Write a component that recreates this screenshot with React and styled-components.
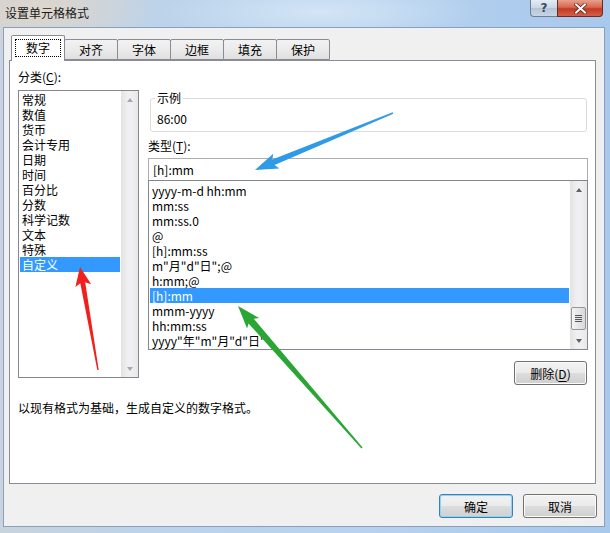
import React from 'react';
import styled, { createGlobalStyle } from 'styled-components';

const GlobalStyle = createGlobalStyle`
  html, body {
    margin: 0;
    padding: 0;
    background: #bcd4ee;
  }
  body {
    font-family: "Noto Sans CJK SC", "Microsoft YaHei", sans-serif;
    font-size: 12px;
    color: #000;
  }
`;

const categories = ['常规', '数值', '货币', '会计专用', '日期', '时间', '百分比', '分数', '科学记数', '文本', '特殊', '自定义'];
const formats = [
  'yyyy-m-d hh:mm',
  'mm:ss',
  'mm:ss.0',
  '@',
  '[h]:mm:ss',
  'm"月"d"日";@',
  'h:mm;@',
  '[h]:mm',
  'mmm-yyyy',
  'hh:mm:ss',
  'yyyy"年"m"月"d"日"',
];
const tabs = ['数字', '对齐', '字体', '边框', '填充', '保护'];

function arrowPoints([tx, ty], [hx, hy], headLen, headHalf, tailW, neckW) {
  const len = Math.hypot(hx - tx, hy - ty);
  const dx = (hx - tx) / len;
  const dy = (hy - ty) / len;
  const nx = -dy;
  const ny = dx;
  const bx = hx - dx * headLen;
  const by = hy - dy * headLen;
  const pts = [
    [tx + nx * tailW / 2, ty + ny * tailW / 2],
    [bx + nx * neckW / 2, by + ny * neckW / 2],
    [bx + nx * headHalf - dx * 3, by + ny * headHalf - dy * 3],
    [hx, hy],
    [bx - nx * headHalf - dx * 3, by - ny * headHalf - dy * 3],
    [bx - nx * neckW / 2, by - ny * neckW / 2],
    [tx - nx * tailW / 2, ty - ny * tailW / 2],
  ];
  return pts.map(p => p.map(v => v.toFixed(1)).join(',')).join(' ');
}

function App() {
  return (
    <>
      <GlobalStyle />
      <Window>
        <TitleBar>
          <Title>设置单元格格式</Title>
          <CaptionButtons>
            <HelpButton>?</HelpButton>
            <CloseButton>
              <svg width="13" height="11" viewBox="0 0 13 11">
                <path d="M2 1.5 L11 9.5 M11 1.5 L2 9.5" stroke="#5a1a10" strokeWidth="3.4" strokeLinecap="square" />
                <path d="M2 1.5 L11 9.5 M11 1.5 L2 9.5" stroke="#fff" strokeWidth="2" strokeLinecap="square" />
              </svg>
            </CloseButton>
          </CaptionButtons>
        </TitleBar>

        <Body>
          <TabRow>
            {tabs.map((t, i) => (
              <Tab key={t} $active={i === 0}>
                {i === 0 ? <Focus>{t}</Focus> : t}
              </Tab>
            ))}
          </TabRow>

          <Panel>
            <Columns>
              <LeftColumn>
                <FieldLabel>分类(<u>C</u>):</FieldLabel>
                <ListBox $height={288}>
                  <Rows>
                    {categories.map((c, i) => (
                      <Row key={c} $selected={i === categories.length - 1}>{c}</Row>
                    ))}
                  </Rows>
                  <ScrollBar>
                    <ScrollArrow $up $disabled />
                    <Track />
                    <ScrollArrow $disabled />
                  </ScrollBar>
                </ListBox>
              </LeftColumn>

              <RightColumn>
                <Sample>
                  <legend>示例</legend>
                  <SampleValue>86:00</SampleValue>
                </Sample>
                <TypeLabel>类型(<u>T</u>):</TypeLabel>
                <TypeInput>[h]:mm</TypeInput>
                <ListBox $height={170}>
                  <Rows $type>
                    {formats.map(f => (
                      <Row key={f} $selected={f === '[h]:mm'}>{f}</Row>
                    ))}
                  </Rows>
                  <ScrollBar>
                    <ScrollArrow $up />
                    <Track>
                      <Thumb>
                        <Grip />
                      </Thumb>
                    </Track>
                    <ScrollArrow />
                  </ScrollBar>
                </ListBox>
                <DeleteButton>删除(<u>D</u>)</DeleteButton>
              </RightColumn>
            </Columns>
            <Description>以现有格式为基础，生成自定义的数字格式。</Description>
          </Panel>

          <Footer>
            <Button $default>确定</Button>
            <Button>取消</Button>
          </Footer>
        </Body>

        <Overlay width="610" height="533" viewBox="0 0 610 533">
          <polygon points={arrowPoints([393, 113], [255, 170], 20, 8, 1.5, 6)} fill="#2f9ae8" />
          <polygon points={arrowPoints([98, 370], [80, 267], 16, 8, 1.5, 5)} fill="#f0201c" />
          <polygon points={arrowPoints([362, 448], [238, 306], 20, 8, 1.5, 7)} fill="#2aa634" />
        </Overlay>
      </Window>
    </>
  );
}

const Window = styled.div`
  position: relative;
  width: 610px;
  height: 533px;
  display: flex;
  flex-direction: column;
  overflow: hidden;
  background:
    radial-gradient(ellipse 120px 40px at 40px 10px, rgba(226, 214, 200, 0.9), rgba(226, 214, 200, 0) 100%),
    radial-gradient(ellipse 160px 30px at 320px 12px, rgba(214, 231, 246, 0.9), rgba(214, 231, 246, 0) 100%),
    linear-gradient(to right, #c8d3dd 0%, #bcd3ea 25%, #b7d2ef 60%, #a8c8ec 100%);
`;

const TitleBar = styled.div`
  height: 27px;
  display: flex;
  justify-content: space-between;
  align-items: flex-start;
  padding-left: 5px;
`;

const Title = styled.div`
  line-height: 26px;
  font-size: 12px;
  color: #1a1a1a;
`;

const CaptionButtons = styled.div`
  display: flex;
  margin-right: 7px;
`;

const HelpButton = styled.div`
  width: 27px;
  height: 17px;
  box-sizing: border-box;
  border: 1px solid #6f7f93;
  border-top: none;
  border-right: none;
  border-radius: 0 0 0 4px;
  background: linear-gradient(#e4ecf5 0%, #c9d6e4 50%, #b4c4d6 51%, #c7d6e6 100%);
  color: #3b4a5c;
  font-family: "DejaVu Sans", sans-serif;
  font-size: 12px;
  font-weight: bold;
  line-height: 16px;
  text-align: center;
`;

const CloseButton = styled.div`
  width: 46px;
  height: 17px;
  box-sizing: border-box;
  border: 1px solid #6d2a20;
  border-top: none;
  border-radius: 0 0 4px 0;
  background: linear-gradient(#e8a08e 0%, #d9674f 45%, #c23a22 55%, #d2604a 100%);
  display: flex;
  align-items: center;
  justify-content: center;
`;

const Body = styled.div`
  flex: 1;
  margin: 0 5px 6px 3px;
  border: 1px solid #8aa0ba;
  background: #f0f0f0;
  display: flex;
  flex-direction: column;
  padding: 7px 8px 0 5px;
`;

const TabRow = styled.div`
  display: flex;
  align-items: flex-end;
  height: 25px;
  padding-left: 2px;
`;

const Tab = styled.div`
  position: relative;
  box-sizing: border-box;
  height: ${p => (p.$active ? '26px' : '21px')};
  margin-bottom: ${p => (p.$active ? '-1px' : '0')};
  margin-right: -1px;
  padding: ${p => (p.$active ? '0 3px' : '0 14px')};
  border: 1px solid #898c95;
  border-bottom: ${p => (p.$active ? 'none' : '1px solid #898c95')};
  border-radius: 2px 2px 0 0;
  background: ${p => (p.$active ? '#fff' : 'linear-gradient(#f2f2f2 0%, #ebebeb 50%, #dfdfdf 100%)')};
  z-index: ${p => (p.$active ? 2 : 1)};
  display: flex;
  align-items: center;
  font-size: 12px;
  line-height: 19px;
  white-space: nowrap;
`;

const Focus = styled.span`
  border: 1px dotted #000;
  padding: 0 10px;
  line-height: 16px;
  margin-top: -1px;
`;

const Panel = styled.div`
  height: 424px;
  box-sizing: border-box;
  border: 1px solid #898c95;
  background: #fff;
  padding: 8px 0 0 8px;
  display: flex;
  flex-direction: column;
`;

const Columns = styled.div`
  display: grid;
  grid-template-columns: 121px 440px;
  column-gap: 9px;
  align-items: start;
`;

const LeftColumn = styled.div`
  display: flex;
  flex-direction: column;
`;

const RightColumn = styled.div`
  display: flex;
  flex-direction: column;
  padding-top: 23px;
`;

const FieldLabel = styled.div`
  line-height: 16px;
  margin-bottom: 5px;
  u { text-decoration-thickness: 1px; text-underline-offset: 2px; }
`;

const ListBox = styled.div`
  height: ${p => p.$height}px;
  box-sizing: border-box;
  border: 1px solid #828790;
  display: flex;
  background: #fff;
`;

const Rows = styled.div`
  flex: 1;
  overflow: hidden;
  padding: ${p => (p.$type ? '2px 1px 0 1px' : '1px 1px 0 1px')};
`;

const Row = styled.div`
  height: 15px;
  line-height: 15px;
  padding-left: 2px;
  white-space: nowrap;
  background: ${p => (p.$selected ? '#3399ff' : 'transparent')};
  color: ${p => (p.$selected ? '#fff' : '#000')};
`;

const ScrollBar = styled.div`
  width: 17px;
  display: flex;
  flex-direction: column;
  background: linear-gradient(to right, #e3e3e3, #f0f0f0 40%, #f0f0f0 60%, #e8e8e8);
`;

const ScrollArrow = styled.div`
  height: 17px;
  display: flex;
  align-items: center;
  justify-content: center;
  &::before {
    content: '';
    width: 0;
    height: 0;
    border-left: 3.5px solid transparent;
    border-right: 3.5px solid transparent;
    ${p => (p.$up ? 'border-bottom' : 'border-top')}: 4px solid ${p => (p.$disabled ? '#a8a8a8' : '#606060')};
  }
`;

const Track = styled.div`
  flex: 1;
  display: flex;
  flex-direction: column;
  justify-content: flex-end;
  padding-bottom: 2px;
`;

const Thumb = styled.div`
  height: 23px;
  margin: 0 1px;
  box-sizing: border-box;
  border: 1px solid #979797;
  border-radius: 2px;
  background: linear-gradient(to right, #f4f4f4, #e6e6e6 50%, #d8d8d8);
  display: flex;
  align-items: center;
  justify-content: center;
`;

const Grip = styled.div`
  width: 7px;
  height: 7px;
  background: repeating-linear-gradient(#555 0 1px, transparent 1px 2px);
`;

const Sample = styled.fieldset`
  margin: 0 1px 0 2px;
  padding: 7px 0 4px 6px;
  border: 1px solid #dcdcdc;
  border-radius: 3px;
  min-width: 0;
  legend {
    margin-left: -2px;
    padding: 0 2px;
    line-height: 12px;
    font-size: 12px;
  }
`;

const SampleValue = styled.div`
  line-height: 16px;
`;

const TypeLabel = styled.div`
  line-height: 16px;
  margin-top: 6px;
  u { text-decoration-thickness: 1px; text-underline-offset: 2px; }
`;

const TypeInput = styled.div`
  height: 22px;
  box-sizing: border-box;
  border: 1px solid #abadb3;
  border-bottom: none;
  padding-left: 4px;
  line-height: 21px;
  margin-top: 4px;
`;

const Button = styled.div`
  width: 74px;
  height: 24px;
  box-sizing: border-box;
  border: 1px solid ${p => (p.$default ? '#3c7fb1' : '#707070')};
  border-radius: 3px;
  background: linear-gradient(#f2f2f2 0%, #ebebeb 50%, #dddddd 51%, #cfcfcf 100%);
  box-shadow: ${p => (p.$default ? 'inset 0 0 0 1px #8fd3f5, inset 0 0 3px #bfe8fb' : 'inset 0 0 0 1px #fcfcfc')};
  display: flex;
  align-items: center;
  justify-content: center;
  font-size: 12px;
  u { text-decoration-thickness: 1px; text-underline-offset: 2px; }
`;

const DeleteButton = styled(Button)`
  align-self: flex-end;
  width: 73px;
  margin-top: 11px;
  margin-right: 1px;
`;

const Description = styled.div`
  margin-top: 15px;
  line-height: 16px;
`;

const Footer = styled.div`
  display: flex;
  justify-content: flex-end;
  gap: 10px;
  margin-top: 10px;
  margin-right: -1px;
`;

const Overlay = styled.svg`
  position: absolute;
  left: 0;
  top: 0;
  pointer-events: none;
`;

export default App;
